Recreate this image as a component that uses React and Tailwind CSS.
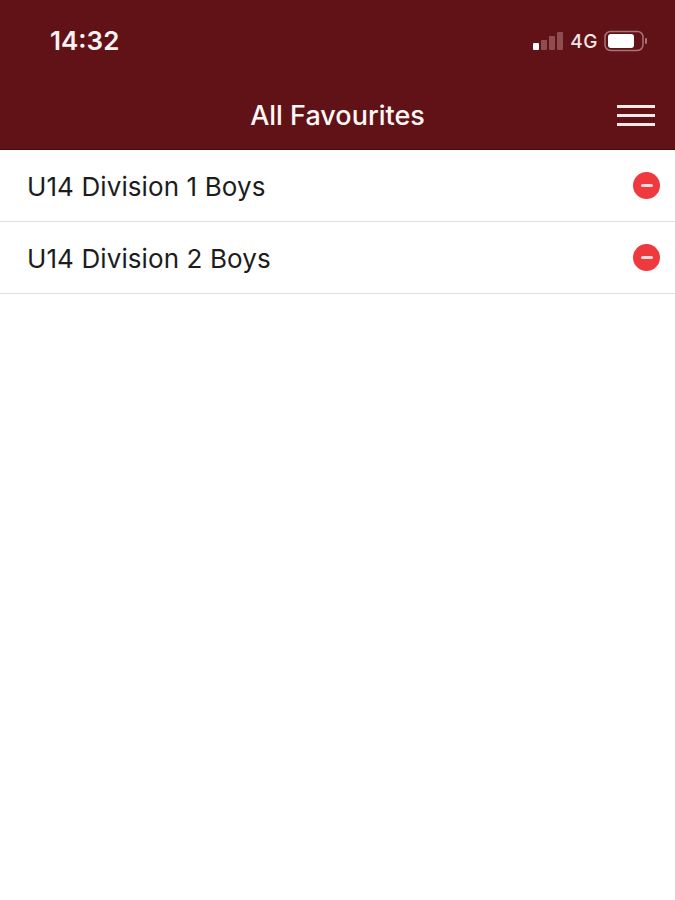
import React from 'react';

const favourites = ['U14 Division 1 Boys', 'U14 Division 2 Boys'];

function SignalIcon() {
  return (
    <svg width="31" height="20" viewBox="0 0 31 20">
      <rect x="0" y="12" width="6" height="7" rx="1" fill="#ffffff" />
      <rect x="8" y="9" width="6" height="10" rx="1" fill="#8f4d50" />
      <rect x="16" y="5" width="6" height="14" rx="1" fill="#8f4d50" />
      <rect x="24" y="1" width="6" height="18" rx="1" fill="#8f4d50" />
    </svg>
  );
}

function BatteryIcon() {
  return (
    <svg width="44" height="22" viewBox="0 0 44 22">
      <rect x="1" y="1.5" width="38" height="19" rx="5.5" fill="none" stroke="#a77375" strokeWidth="1.5" />
      <rect x="4" y="4" width="26" height="14" rx="3" fill="#ffffff" />
      <rect x="41" y="8" width="2" height="6" rx="1" fill="#a77375" />
    </svg>
  );
}

function RemoveIcon() {
  return (
    <div className="flex h-[27px] w-[27px] items-center justify-center rounded-full bg-[#ee3a3e]">
      <div className="h-[3px] w-[12px] rounded-full bg-[#f9d9d9]" />
    </div>
  );
}

export default function App() {
  return (
    <div className="min-h-[900px] bg-white" style={{ fontFamily: 'Inter, "Liberation Sans", sans-serif' }}>
      <header className="h-[150px] bg-[#611216] border-b border-[#4d0a0e] text-white">
        <div className="flex h-[82px] items-center justify-between pl-[50px] pr-[27px]">
          <span className="text-[26px] font-semibold leading-none text-[#fbf3f3]">14:32</span>
          <div className="flex items-center gap-[6px]">
            <SignalIcon />
            <span className="text-[19px] font-medium leading-none tracking-[0.5px] text-[#f3e6e6]">4G</span>
            <BatteryIcon />
          </div>
        </div>
        <div className="relative flex h-[67px] items-start justify-center pt-[18px]">
          <span className="text-[27px] font-medium leading-[32px] text-[#fdf7f7]">All Favourites</span>
          <div className="absolute right-[20px] top-[23px] flex w-[38px] flex-col gap-[6px]">
            <div className="h-[3px] bg-[#f7e9e9]" />
            <div className="h-[3px] bg-[#f7e9e9]" />
            <div className="h-[3px] bg-[#f7e9e9]" />
          </div>
        </div>
      </header>
      <ul>
        {favourites.map((name) => (
          <li key={name} className="flex h-[72px] items-center justify-between border-b border-[#dedede] pl-[27px] pr-[15px]">
            <span className="pt-[2px] text-[26px] leading-none tracking-[0.1px] text-[#1c1c1c]">{name}</span>
            <RemoveIcon />
          </li>
        ))}
      </ul>
    </div>
  );
}
